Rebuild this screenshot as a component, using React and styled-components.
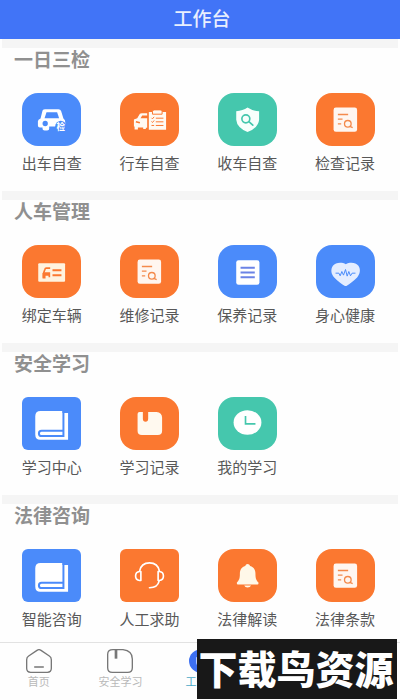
import React, {useState} from 'react';
import styled, {createGlobalStyle} from 'styled-components';

const colors = {
    blue: '#4b8bfa',
    orange: '#fb7830',
    teal: '#45c7ad',
}

const CarCheckIcon = () => (
    <TileSvg>
        <path fill="#fff" d="M62 52 Q64 48 70 48 H110 Q116 48 118 53 L125 76 Q131 80 131 90 V100 H82 V108 Q82 112 76 112 H68 Q62 112 62 108 V103 H54 Q48 103 48 97 V84 Q48 79 56 76 Z" />
        <path fill={colors.blue} d="M74 57 H106 L112 75 H68 Z" />
        <circle cx="70" cy="91" r="8" fill={colors.blue} />
        <circle cx="117" cy="100" r="17" fill={colors.blue} />
        <text x="104" y="110" fontSize="26" fontWeight="700" fill="#fff">检</text>
    </TileSvg>
)

const CarListIcon = () => (
    <TileSvg>
        <path fill="#fffaf3" d="M42 79 L52 75 L60 62 Q62 60 66 60 H82 V67 H67 L62 75 H82 V104 H78 V108 H70 V103 H54 V109 H44 V100 H42 Z" />
        <path stroke={colors.orange} strokeWidth="5" d="M48 86 L60 89" />
        <path fill="#fffaf3" d="M87 56 H139 V110 H87 Z" />
        <path fill="#fffaf3" stroke={colors.orange} strokeWidth="3" d="M98 63 V54 Q98 50 104 50 H121 Q127 50 127 54 V63 Z" />
        <path fill="none" stroke={colors.orange} strokeWidth="3" d="M95 74 l3 3 l5 -6 M108 75 H131 M95 85 l3 3 l5 -6 M108 86 H131 M95 97 H103 M108 97 H131" />
    </TileSvg>
)

const ShieldIcon = () => (
    <TileSvg>
        <path fill="#f7fffc" d="M89 43 Q104 53 124 54 V80 Q122 104 89 117 Q57 104 55 80 V54 Q75 53 89 43 Z" />
        <circle cx="84" cy="77" r="12" fill="none" stroke={colors.teal} strokeWidth="5" />
        <path stroke={colors.teal} strokeWidth="5" strokeLinecap="round" d="M94 86 L105 96" />
    </TileSvg>
)

const DocSearchIcon = () => (
    <TileSvg>
        <rect x="53" y="43" width="71" height="73" rx="7" fill="#fff6f0" />
        <path stroke="#f48a4c" strokeWidth="4" d="M66 64 H97 M66 78 H80 M66 92 H76" />
        <circle cx="96" cy="92" r="10" fill="none" stroke="#f48a4c" strokeWidth="4" />
        <path stroke="#f48a4c" strokeWidth="4" strokeLinecap="round" d="M102 100 L109 103" />
    </TileSvg>
)

const CarCardIcon = () => (
    <TileSvg>
        <rect x="49" y="54" width="81" height="56" rx="3" fill="#fff3df" />
        <path fill="none" stroke={colors.orange} strokeWidth="5" d="M85 69 H73 Q70 69 69 73 L65 84 V98" />
        <path fill={colors.orange} d="M62 84 Q64 81 68 81 H85 V96 H80 V92 H71 V100 H62 Z" />
        <path stroke={colors.orange} strokeWidth="6" d="M92 75 H119 M92 90 H119" />
    </TileSvg>
)

const ListIcon = () => (
    <TileSvg>
        <rect x="55" y="45" width="70" height="74" rx="7" fill="#fff" />
        <path stroke="#6b83e6" strokeWidth="6" d="M68 68 H111 M68 82 H111 M68 96 H111" />
    </TileSvg>
)

const HeartIcon = () => (
    <TileSvg>
        <path fill="#e4edff" d="M90 57 C102 50 120 51 128 62 C136 74 132 88 124 97 C114 108 101 116 93 122 Q90 124 86 122 C77 116 65 108 55 97 C46 88 43 74 51 62 C59 51 78 50 90 57 Z" />
        <path fill="none" stroke={colors.blue} strokeWidth="3" strokeLinejoin="round" d="M59 84 H69 L73 92 L78 79 L83 90 L89 73 L94 93 L99 79 L104 92 L109 84 H119" />
    </TileSvg>
)

const BookIcon = () => (
    <TileSvg>
        <path fill="#fff" d="M40 57 Q40 41 56 41 H122 V47 H139 V128 H55 Q40 128 40 112 Z" />
        <path fill="none" stroke={colors.blue} strokeWidth="6" d="M125 41 V117 H59 Q51 117 51 109 Q51 101 59 101 H125" />
    </TileSvg>
)

const BookmarkIcon = () => (
    <TileSvg>
        <path fill="#fff9ef" d="M59 44 H69 V65 Q69 74 77 74 Q85 74 85 65 V44 H110 Q127 46 127 61 V102 Q127 114 114 114 H66 Q53 114 53 102 V50 Q53 44 59 44 Z" />
    </TileSvg>
)

const ClockIcon = () => (
    <TileSvg>
        <ellipse cx="89" cy="76" rx="42" ry="37" fill="#fff" />
        <path fill="none" stroke={colors.teal} strokeWidth="5" d="M83 56 V80 H113" />
    </TileSvg>
)

const HeadsetIcon = () => (
    <TileSvg>
        <path fill="none" stroke="#fff" strokeWidth="5" strokeLinecap="round" strokeLinejoin="round" d="M59 66 C62 50 74 41 89 41 C104 41 116 50 119 66 M63 67 V94 H59 C43 92 43 69 59 67 Z M115 67 V94 H119 C135 92 135 69 119 67 Z M118 96 C115 109 104 116 89 116" />
    </TileSvg>
)

const BellIcon = () => (
    <TileSvg>
        <path fill="#fff8e8" d="M89 44 Q95 44 97 50 C109 54 113 62 113 74 C113 89 116 94 122 100 Q123 106 119 106 H60 Q56 106 57 100 C63 94 66 89 66 74 C66 62 70 54 82 50 Q84 44 89 44 Z M79 109 H100 Q97 115 89 115 Q82 115 79 109 Z" />
    </TileSvg>
)

const HomeIcon = () => (
    <NavSvg viewBox="0 0 78 72">
        <path d="M33 4 Q39 0 45 4 L70 21 Q76 25 76 32 V58 Q76 70 64 70 H14 Q2 70 2 58 V32 Q2 25 8 21 Z M26 54 H52" />
    </NavSvg>
)

const StudyIcon = () => (
    <NavSvg viewBox="0 0 78 72">
        <path d="M18 2 H48 C66 4 76 14 76 30 V56 Q76 70 62 70 H16 Q2 70 2 56 V16 Q2 2 18 2 Z" />
        <path strokeWidth="8" d="M27 2 V29" />
    </NavSvg>
)

const WorkIcon = () => (
    <NavSvg viewBox="0 0 78 72">
        <ellipse cx="39" cy="36" rx="39" ry="36" fill="#3d70f2" stroke="none" />
        <path stroke="#b9ccff" d="M23 26 V40 Q23 52 39 52 Q55 52 55 40 V26" />
    </NavSvg>
)

const sections = [
    {
        title: '一日三检',
        items: [
            {label: '出车自查', color: 'blue', Icon: CarCheckIcon},
            {label: '行车自查', color: 'orange', Icon: CarListIcon},
            {label: '收车自查', color: 'teal', Icon: ShieldIcon},
            {label: '检查记录', color: 'orange', Icon: DocSearchIcon},
        ],
    },
    {
        title: '人车管理',
        items: [
            {label: '绑定车辆', color: 'orange', Icon: CarCardIcon},
            {label: '维修记录', color: 'orange', Icon: DocSearchIcon},
            {label: '保养记录', color: 'blue', Icon: ListIcon},
            {label: '身心健康', color: 'blue', Icon: HeartIcon},
        ],
    },
    {
        title: '安全学习',
        items: [
            {label: '学习中心', color: 'blue', Icon: BookIcon, square: true},
            {label: '学习记录', color: 'orange', Icon: BookmarkIcon},
            {label: '我的学习', color: 'teal', Icon: ClockIcon},
        ],
    },
    {
        title: '法律咨询',
        items: [
            {label: '智能咨询', color: 'blue', Icon: BookIcon, square: true},
            {label: '人工求助', color: 'orange', Icon: HeadsetIcon, square: true},
            {label: '法律解读', color: 'orange', Icon: BellIcon},
            {label: '法律条款', color: 'orange', Icon: DocSearchIcon},
        ],
    },
]

const tabs = [
    {label: '首页', Icon: HomeIcon},
    {label: '安全学习', Icon: StudyIcon},
    {label: '工作台', Icon: WorkIcon},
]


const App = () => {

    const [activeTab, setActiveTab] = useState('工作台');

    return (
        <>
        <GlobalStyle />
        <Page>
            <Header>
                <HeaderTitle>工作台</HeaderTitle>
            </Header>
            <Main>
                {sections.map(section => (
                    <Section key={section.title}>
                        <SectionTitle>{section.title}</SectionTitle>
                        <Grid>
                            {section.items.map(({label, color, Icon, square}) => (
                                <Entry key={label} type="button">
                                    <Tile $color={colors[color]} $square={square}><Icon /></Tile>
                                    <EntryLabel>{label}</EntryLabel>
                                </Entry>
                            ))}
                        </Grid>
                    </Section>
                ))}
            </Main>
            <TabBar>
                <TabList>
                    {tabs.map(({label, Icon}) => (
                        <Tab key={label} type="button" $active={label === activeTab} onClick={() => setActiveTab(label)}>
                            <Icon />
                            {label}
                        </Tab>
                    ))}
                </TabList>
            </TabBar>
            <Watermark>下载鸟资源</Watermark>
        </Page>
        </>
    )
}

export default App;


const GlobalStyle = createGlobalStyle`
    * {
        box-sizing: border-box;
        margin: 0;
        padding: 0;
    }

    body {
        background-color: #fefefe;
        font-family: "Noto Sans CJK SC", "Noto Sans", sans-serif;
    }

    button {
        font-family: inherit;
        border: none;
        background: none;
        cursor: pointer;
    }
`

const Page = styled.div`
    position: relative;
    min-height: 100vh;
    display: flex;
    flex-direction: column;
`

const Header = styled.header`
    height: 39px;
    display: flex;
    align-items: center;
    justify-content: center;
    padding: 0 0 4px 4px;
    background-color: #4174f7;
`

const HeaderTitle = styled.h1`
    font-size: 19px;
    line-height: 24px;
    font-weight: 500;
    color: #e9effe;
`

const Main = styled.main`
    flex: 1;
`

const Section = styled.section`
    padding-bottom: 18px;

    &::before {
        content: '';
        display: block;
        height: 9px;
        margin: 0 2px;
        background-color: #f5f5f5;
    }

    &:last-child {
        padding-bottom: 8px;
    }
`

const SectionTitle = styled.h2`
    padding-left: 14px;
    font-size: 19px;
    line-height: 22px;
    font-weight: 700;
    color: #909090;
`

const Grid = styled.div`
    display: grid;
    grid-template-columns: repeat(4, 1fr);
    padding: 23px 6px 0 3px;
`

const Entry = styled.button`
    display: flex;
    flex-direction: column;
    align-items: center;
    gap: 6px;
`

const Tile = styled.span`
    display: block;
    width: 59px;
    height: 53px;
    overflow: hidden;
    border-radius: ${({$square}) => $square ? '6px' : '16px'};
    background-color: ${({$color}) => $color};
`

const TileSvg = styled.svg.attrs({viewBox: '0 0 178 158', 'aria-hidden': true})`
    display: block;
    width: 100%;
    height: 100%;
`

const EntryLabel = styled.span`
    font-size: 15px;
    line-height: 21px;
    color: #585858;
`

const TabBar = styled.nav`
    height: 58px;
    overflow: hidden;
    border-top: 1px solid #e2e2e2;
`

const TabList = styled.div`
    display: grid;
    grid-template-columns: repeat(5, 1fr);
    margin: 0 -6px 0 -2px;
    padding-top: 6px;
`

const Tab = styled.button`
    display: flex;
    flex-direction: column;
    align-items: center;
    gap: 1px;
    font-size: 11px;
    line-height: 14px;
    color: ${({$active}) => $active ? '#4aa9c8' : '#b9b9b9'};
`

const NavSvg = styled.svg`
    width: 26px;
    height: 24px;
    fill: none;
    stroke: #777;
    stroke-width: 4px;
    stroke-linecap: round;

    path[stroke-width] {
        stroke-width: 8px;
        stroke-linecap: butt;
    }
`

const Watermark = styled.div`
    position: absolute;
    right: 3px;
    bottom: 1px;
    width: 200px;
    height: 60px;
    padding-right: 2px;
    text-align: center;
    background-color: #181818;
    color: #fff;
    font-size: 39px;
    line-height: 56px;
    font-weight: 900;
    white-space: nowrap;
`
